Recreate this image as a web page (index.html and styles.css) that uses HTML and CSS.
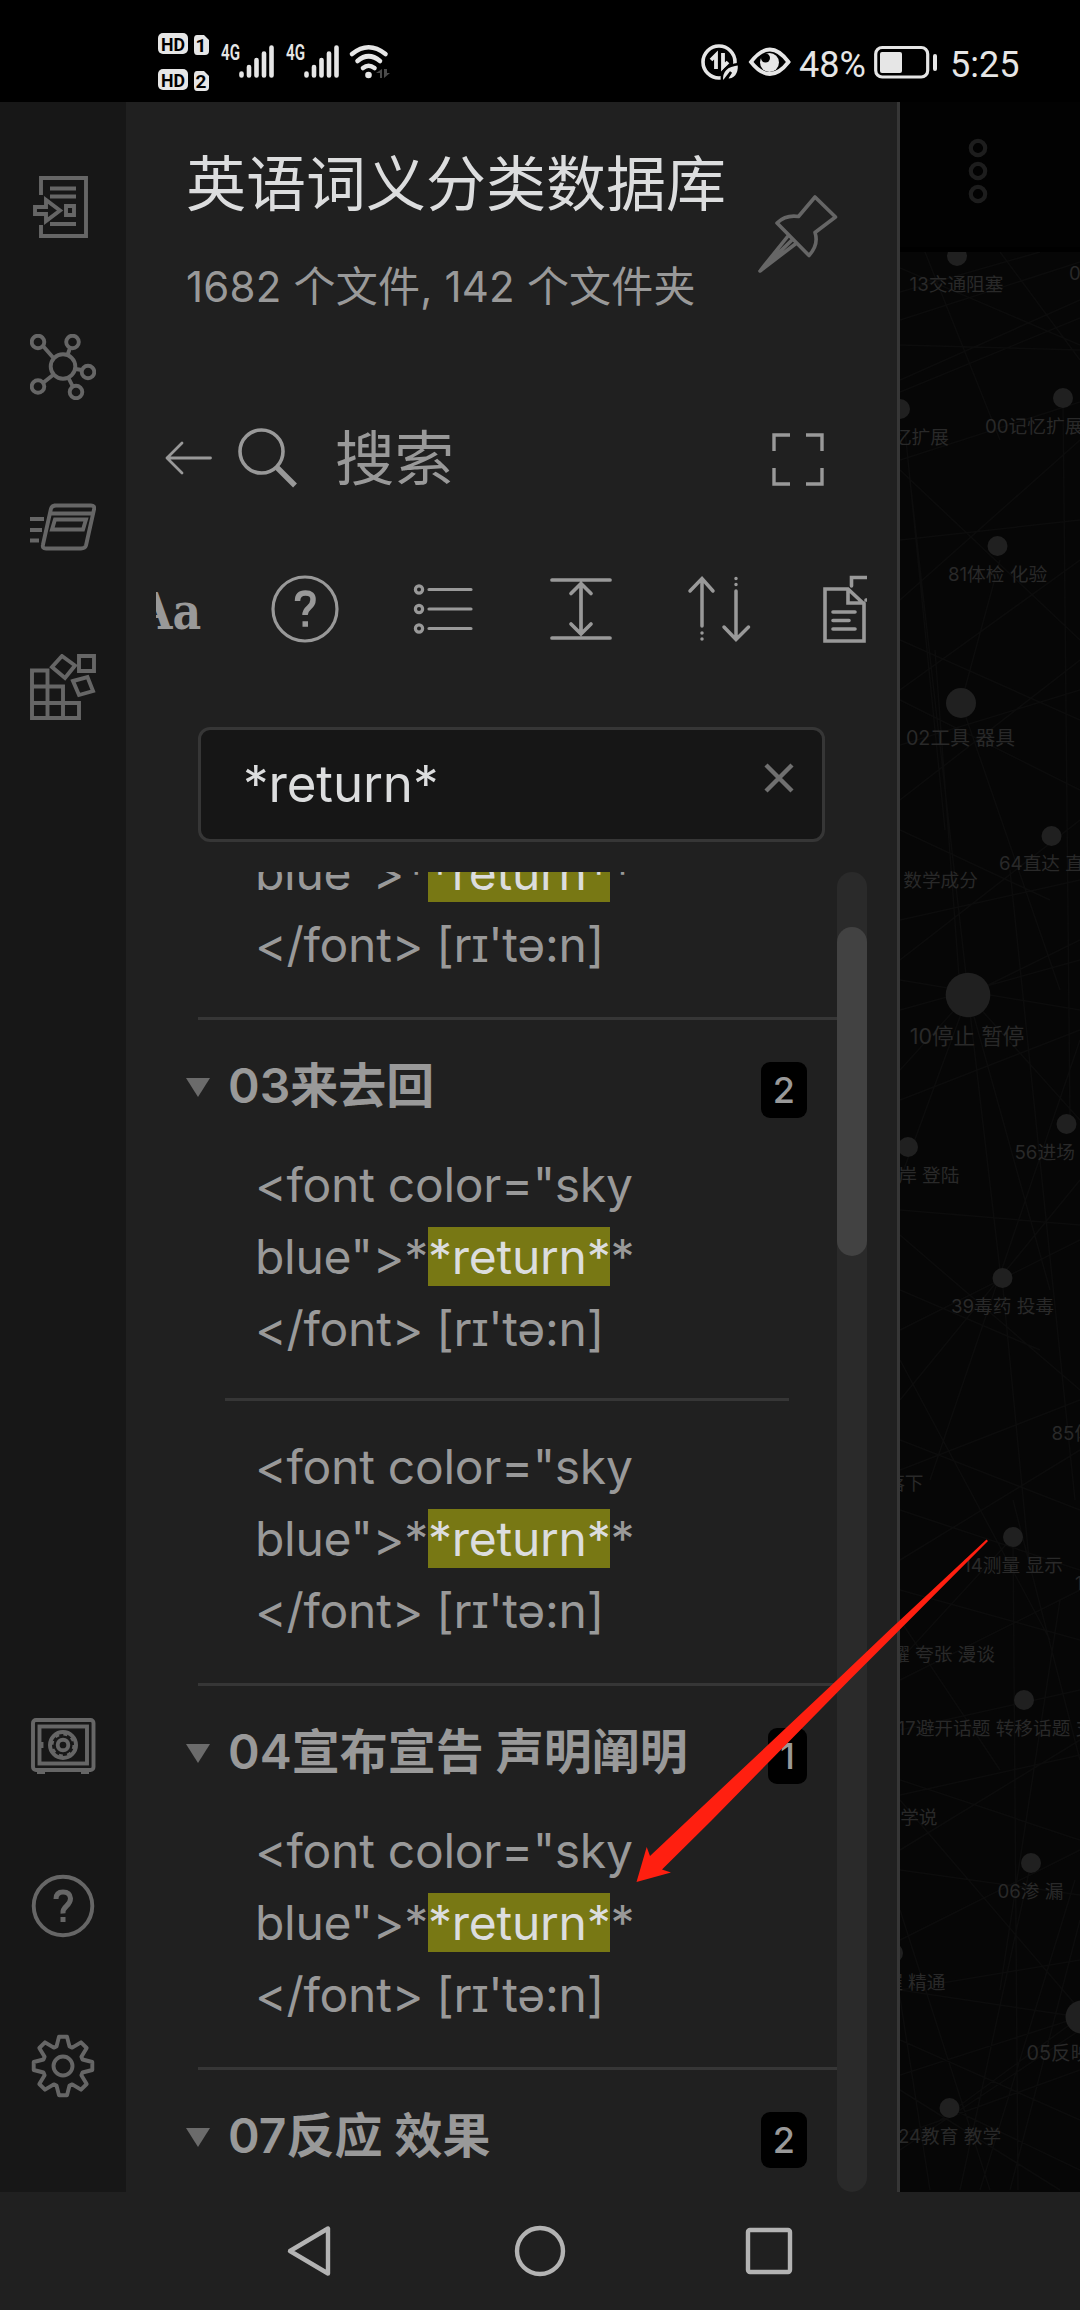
FILE: index.html
```html
<!DOCTYPE html>
<html lang="zh-CN">
<head>
<meta charset="utf-8">
<title>英语词义分类数据库</title>
<link rel="stylesheet" href="styles.css">
</head>
<body>
<div class="screen">
  <header class="status">
    <svg class="status-left" width="240" height="70" viewBox="155 25 240 70">
      <g fill="#e6e6e6">
        <rect x="158" y="33" width="30" height="21" rx="5"/>
        <rect x="158" y="69" width="30" height="21" rx="5"/>
        <path d="M197 35h7l5 5v11q0 4-4 4h-8q-3 0-3-4V39q0-4 3-4z"/>
        <path d="M197 71h7l5 5v11q0 4-4 4h-8q-3 0-3-4V75q0-4 3-4z"/>
      </g>
      <g class="chip">
        <text x="173" y="50.500" textLength="24" lengthAdjust="spacingAndGlyphs">HD</text><text x="173" y="86.500" textLength="24" lengthAdjust="spacingAndGlyphs">HD</text>
        <text x="201" y="51.500">1</text><text x="201" y="87.500">2</text>
      </g>
      <g class="net"><text x="221" y="60" textLength="19" lengthAdjust="spacingAndGlyphs">4G</text><text x="286" y="60" textLength="19" lengthAdjust="spacingAndGlyphs">4G</text></g>
      <path stroke="#e6e6e6" stroke-width="4.600" stroke-linecap="round" d="M241.500 73.500v2M249 67v8.500M256.500 60v15.500M264 53.500v22M271.500 47.500v28M306.500 73.500v2M314 67v8.500M321.500 60v15.500M329 53.500v22M336.500 47.500v28"/>
      <g fill="none" stroke="#e6e6e6" stroke-width="4.600" stroke-linecap="round"><path d="M352 54q16.500-13.500 33.500 0M357.500 61q11-9.500 22.500 0M363 68q5.500-4.500 11.500 0"/></g>
      <circle cx="368.500" cy="75" r="3.300" fill="#e6e6e6"/>
      <path fill="#4a4a4a" d="M376 73l6-4v9h-2v-5zM384 69v9l6-5h-3v-4z"/>
    </svg>
    <div class="status-right">
      <svg width="100" height="46" viewBox="698 40 100 46">
        <circle cx="719" cy="62" r="16" fill="none" stroke="#e6e6e6" stroke-width="3.600"/>
        <path fill="none" stroke="#e6e6e6" stroke-width="3.800" d="M716 69V55l-5 5M723 53v14l5-5"/>
        <path fill="#e6e6e6" stroke="#000" stroke-width="2.500" d="M722 81q-2-15 17-17 1 16-13 16l5-8-7 9z"/>
        <path fill="none" stroke="#e6e6e6" stroke-width="3.800" d="M751 62q19-25 37.500 0-18.500 24-37.500 0z"/>
        <circle cx="769.500" cy="62.500" r="9.500" fill="#e6e6e6"/><circle cx="765.500" cy="58" r="4.500" fill="#000"/>
      </svg>
      <span class="pct">48%</span>
      <svg class="battery" width="64" height="34" viewBox="874 45 64 34">
        <rect x="875.700" y="47.500" width="52" height="29.500" rx="6.500" fill="none" stroke="#e6e6e6" stroke-width="3.200"/>
        <rect x="880" y="52" width="22" height="21" rx="2" fill="#e6e6e6"/><rect x="933" y="54" width="4" height="17" rx="2" fill="#e6e6e6"/>
      </svg>
      <span class="clock">5:25</span>
    </div>
  </header>

  <div class="app">
    <nav class="ribbon">
      <svg viewBox="30 174 66 66"><path d="M41 195v-17h45v58H41v-11M50 188.500h26M50 196.500h26M50 224h26M66 206h8v9h-8zM35 207h11v-7l14 10.500L46 221v-7H35z"/></svg>
      <svg viewBox="30 334 66 66"><circle cx="63" cy="366.500" r="12.300"/><circle cx="38" cy="342" r="6.300"/><circle cx="72.500" cy="342" r="6.300"/><circle cx="88" cy="372" r="6.300"/><circle cx="38" cy="386.500" r="6.300"/><circle cx="76" cy="392" r="6.300"/><path d="M43 346l10.500 12M70 348l-2.500 7M75.500 369l6.500 1M43.500 382.500L53 375M68.500 378l4 8"/></svg>
      <svg viewBox="30 494 66 66"><path d="M54 505.500h37q4 0 3 4l-8 36q-1 3-5 3H46q-4 0-3-4l8-36q1-3 5-3M50 513.500h43M55 519.500h31l-3 10H52zM30 519h14M30 530h12M30 540.500h9"/></svg>
      <svg viewBox="30 654 66 66"><path d="M32 670.500h15.500V718M32 668.500v49.500h47v-15H32M32 686.500h31v32M79 656h15v15H79zM62 656l13 9.500L65 678l-13-11zM73 681l14.500-4L93 691l-14 4z"/></svg>
      <span class="grow"></span>
      <svg viewBox="30 1714 66 66"><rect x="33" y="1721" width="60.500" height="50" rx="3"/><rect x="39.500" y="1727.500" width="47.500" height="37"/><circle cx="63" cy="1746" r="13" stroke-width="4"/><circle cx="63" cy="1746" r="10.500" stroke-width="2" stroke-dasharray="4 4.250"/><circle cx="63" cy="1746" r="5.300"/><path d="M37 1773h8M81 1773h8M41.500 1743v6"/></svg>
      <svg viewBox="30 1873 66 66"><circle cx="63" cy="1906" r="29.300"/><path stroke-width="5" d="M56 1899q0-7 7-7t7.500 6.500q0 4-4 7.500t-3.500 7.500M60.500 1919.500h5"/></svg>
      <svg viewBox="-33 -33 66 66"><circle r="9.500"/><path stroke-linejoin="round" d="M-6.500-19.500L-4-29.300H4L6.500-19.500 9.200-18.400 18-23.700 23.700-18 18.400-9.200 19.500-6.500 29.300-4V4L19.500 6.500 18.400 9.200 23.700 18 18 23.700 9.200 18.400 6.500 19.500 4 29.300H-4L-6.500 19.500-9.200 18.400-18 23.700-23.700 18-18.400 9.200-19.500 6.500-29.300 4V-4L-19.500-6.500-18.400-9.200-23.700-18-18-23.700-9.200-18.400z"/></svg>
    </nav>

    <main class="drawer">
      <div class="vault">
        <div>
          <h1>英语词义分类数据库</h1>
          <p>1682 个文件, 142 个文件夹</p>
        </div>
        <svg width="80" height="80" viewBox="758 194 80 80" fill="none" stroke="#666" stroke-width="3.600" stroke-linejoin="round"><path d="M815 197l20.500 20-20.500 15.500q4 12-6 23L777 223q9-8.500 21.500-6.500zM788 236l-28 35 36-27.500M792.500 239.500L760 271"/></svg>
      </div>

      <div class="tabhead">
        <svg width="134" height="64" viewBox="165 426 134 64" fill="none" stroke="#999" stroke-linecap="round"><path stroke-width="2.800" stroke-linejoin="round" d="M210.500 458H167M182 443l-15 15 15 15"/><circle cx="261.500" cy="451.500" r="21.500" stroke-width="3.600"/><path stroke-width="5.500" stroke-linecap="butt" d="M277 467.500l18 18"/></svg>
        <span>搜索</span>
        <svg class="expand" width="54" height="56" viewBox="771 430 54 56" fill="none" stroke="#999" stroke-width="3.400"><path d="M790 434h-16v16M806 434h16v16M774 467v16h16M822 467v16h-16"/></svg>
      </div>

      <div class="tools">
        <span class="case">Aa</span>
        <svg width="596" height="72" viewBox="271 573 596 72" fill="none" stroke="#999" stroke-width="3.200" stroke-linecap="round">
          <circle cx="305" cy="609" r="32"/><path stroke-width="5.500" stroke-linecap="butt" d="M297.500 601q0-8 8-8t7.500 7q0 4-4 7.500t-4 7.500M302.500 624h5.500"/>
          <circle cx="419" cy="589.500" r="3.600"/><circle cx="419" cy="609" r="3.600"/><circle cx="419" cy="628.500" r="3.600"/>
          <path d="M429 589.500h42M429 609h42M429 628.500h42"/>
          <path stroke-width="3.700" d="M552 580h58M552 638h58M581 585v48M571 593.500l10-10 10 10M571 624l10 10 10-10"/>
          <path stroke-width="3.500" d="M702 626v-47M690 591l12-12.500L713 591M702 633v.1M702 639v.1M736 591v48M724 627l12 12.500 12.500-12.500M736 578.500v.1M736 584.500v.1"/>
          <path stroke-width="3.600" d="M848 589h-23v52h39v-37zM848 589v14h16M833 612h22M833 620.500h16M833 629h22M851.500 586v-8.500H869M866 600h4"/>
        </svg>
      </div>

      <div class="search"><span>*return*</span><svg width="32" height="32" viewBox="0 0 32 32" stroke="#707070" stroke-width="4.400"><path d="M3 3l26 26M29 3L3 29"/></svg></div>

      <div class="results">
        <div class="list">
          <section class="group first">
            <div class="match">&lt;font color="sky<br>blue"&gt;*<mark>*return*</mark>*<br>&lt;/font&gt; [rɪ'tə:n]</div>
          </section>
          <section class="group">
            <h2><i></i><b>03来去回</b><em>2</em></h2>
            <div class="match">&lt;font color="sky<br>blue"&gt;*<mark>*return*</mark>*<br>&lt;/font&gt; [rɪ'tə:n]</div>
            <div class="match">&lt;font color="sky<br>blue"&gt;*<mark>*return*</mark>*<br>&lt;/font&gt; [rɪ'tə:n]</div>
          </section>
          <section class="group">
            <h2><i></i><b>04宣布宣告 声明阐明</b><em>1</em></h2>
            <div class="match">&lt;font color="sky<br>blue"&gt;*<mark>*return*</mark>*<br>&lt;/font&gt; [rɪ'tə:n]</div>
          </section>
          <section class="group">
            <h2><i></i><b>07反应 效果</b><em>2</em></h2>
          </section>
        </div>
        <div class="track"><div class="thumb"></div></div>
      </div>
    </main>

    <svg class="graph" viewBox="900 102 180 2090">
      <rect x="900" y="102" width="180" height="2090" fill="#060606"/>
      <path class="edges" d="M900 320L1080 262M900 292L1040 252M900 380L1080 300M900 268L1080 345M925 252L1000 440M1000 252L1080 360M900 345L1080 350M900 392L1080 318M900 460L1080 402M900 470L1080 640M905 430L945 830M900 540L1080 520M900 600L1080 440M910 480L970 1010M1063 400L1070 1120M900 690L1080 560M900 640L1080 720M900 745L1080 690M900 700L1080 790M961 703L1000 560M900 800L1080 660M900 830L1050 900M935 650L960 990M961 703L1060 990M900 920L1080 880M900 960L1080 820M968 995L1080 940M900 980L1080 1010M968 995L900 1180M968 995L1000 1270M968 995L1050 1290M968 995L1080 1120M968 995L900 1070M900 1010L1080 960M1010 870L1075 1500M900 1100L1080 1030M900 1210L1080 1225M900 1330L1080 1240M1080 1040L930 1480M900 1235L1080 1390M900 1290L1040 1350M1002 1278L1030 1570M900 1400L1080 1180M900 1440L1080 1510M900 1470L1080 1400M900 1510L1080 1570M900 1360L1050 1640M900 1560L1080 1450M1013 1537L1018 2190M1013 1537L900 1660M900 1590L1080 1640M1013 1500L1080 1760M900 1680L1080 1590M900 1620L1000 1770M900 1730L1080 1690M900 1795L1080 1755M900 1780L1080 1840M1060 1600L1000 1990M900 1850L1080 1740M900 1870L1080 1895M1031 1863L960 2190M900 1940L1080 1850M893 1953L930 2190M900 1800L1080 2010M900 1990L1080 1960M1080 2017L900 1990M1080 2017L900 2075M1080 2017L940 2120M900 2040L1080 2120M900 2090L1060 2190M1075 1880L980 2190M900 2135L1080 2070M900 2150L1080 2030M950 2108L1080 2170M900 1910L990 2190M1080 1920L1010 2190"/>
      <g class="nodes"><circle cx="957" cy="256" r="10"/><circle cx="900" cy="409" r="10"/><circle cx="1063" cy="398" r="10"/><circle cx="997.500" cy="546" r="10"/><circle cx="961" cy="703" r="15"/><circle cx="1051.500" cy="836" r="10"/><circle cx="968" cy="995" r="22.300"/><circle cx="1066.500" cy="1124" r="10"/><circle cx="908" cy="1147" r="10"/><circle cx="1002.500" cy="1278" r="10"/><circle cx="1013" cy="1537" r="10"/><circle cx="1024" cy="1700" r="10"/><circle cx="1031" cy="1863" r="10"/><circle cx="893" cy="1953" r="10"/><circle cx="1082" cy="2017" r="16.500"/><circle cx="949.500" cy="2108" r="10"/></g>
      <g class="labels">
        <text x="956.500" y="291" class="mid">13交通阻塞</text><text x="1069" y="280">00</text>
        <text x="949" y="444" class="end">忆扩展</text><text x="985" y="433">00记忆扩展</text>
        <text x="997.500" y="580.500" class="mid">81体检 化验</text><text x="960.500" y="744.500" class="mid big">02工具 器具</text>
        <text x="999" y="870">64直达 直</text><text x="978" y="886.500" class="end">数学成分</text>
        <text x="967" y="1044" class="mid huge">10停止 暂停</text><text x="1014.500" y="1159">56进场</text>
        <text x="959.500" y="1182" class="end">岸 登陆</text><text x="1002.500" y="1313" class="mid">39毒药 投毒</text>
        <text x="1051.500" y="1440">85体</text><text x="923.500" y="1490" class="end">落下</text>
        <text x="1013" y="1572" class="mid">14测量 显示</text><text x="1075" y="1590">1</text>
        <text x="995" y="1660.500" class="end">耀 夸张 漫谈</text><text x="897.500" y="1735">17避开话题 转移话题 支</text>
        <text x="937.500" y="1824" class="end">学说</text><text x="1030.500" y="1897.500" class="mid">06渗 漏</text>
        <text x="945.500" y="1989" class="end">握 精通</text><text x="1026.500" y="2060" class="big">05反映</text>
        <text x="949.500" y="2142.500" class="mid">24教育 教学</text>
      </g>
      <rect x="900" y="102" width="180" height="145" fill="#020202"/><rect x="900" y="247" width="180" height="5" fill="#000"/>
      <g fill="none" stroke="#1d1d1d" stroke-width="4.200"><circle cx="978" cy="148" r="7.200"/><circle cx="978" cy="171" r="7.200"/><circle cx="978" cy="194" r="7.200"/></g>
    </svg>
  </div>

  <footer class="keys">
    <svg viewBox="0 0 60 60"><path stroke-linejoin="round" d="M47 7.500v45L9 30z"/></svg>
    <svg viewBox="0 0 60 60"><circle cx="30" cy="30" r="23"/></svg>
    <svg viewBox="0 0 60 60"><rect x="9" y="9" width="42" height="42" rx="2"/></svg>
  </footer>

  <svg class="arrow" width="1080" height="2310" viewBox="0 0 1080 2310"><path fill="#ff1f10" d="M986.500 1539.500L890 1629.500 837 1680 694 1814.500 650 1856 646.700 1847 636.500 1882 671 1872.500 662 1869.500 711 1821 849.500 1680 890 1639.500 988 1541z"/></svg>
</div>
</body>
</html>
```
FILE: styles.css
```css
* { box-sizing: border-box; }
body { margin: 0; background: #000; font-family: Inter, "Noto Sans CJK SC", sans-serif; }
.screen { position: relative; width: 1080px; height: 2310px; overflow: hidden; display: flex; flex-direction: column; background: #202020; }
svg { display: block; flex: none; }

.status { height: 102px; background: #000; display: flex; justify-content: space-between; padding: 25px 60px 0 155px; color: #e6e6e6; }
.chip { font: 700 19px Roboto, sans-serif; fill: #000; text-anchor: middle; }
.net { font: 600 21.500px Roboto, sans-serif; fill: #e6e6e6; }
.status-right { display: flex; align-items: flex-start; font: 36px/40px Roboto, sans-serif; }
.status-right svg { margin-top: 15px; }
.pct { width: 75px; margin: 20px 0 0 1px; }
.status-right .battery { margin-top: 20px; }
.clock { width: 70px; margin: 20px 0 0 12px; }

.app { height: 2090px; display: flex; }
.ribbon { width: 126px; background: #171717; display: flex; flex-direction: column; align-items: center; gap: 94px; padding: 72px 0 93px; }
.ribbon svg { width: 66px; height: 66px; fill: none; stroke: #666; stroke-width: 3.900; }
.grow { flex: 1; margin-bottom: -94px; }

.drawer { width: 774px; background: #202020; border-right: 3px solid #363636; display: flex; flex-direction: column; }
.vault { height: 276px; display: flex; justify-content: space-between; padding: 37px 59px 0 60px; }
.vault svg { margin-top: 55px; }
h1 { margin: 0; font-size: 60px; line-height: 90px; font-weight: 400; color: #dcddde; white-space: nowrap; }
.vault p { margin: 28px 0 0; font-size: 42px; line-height: 60px; letter-spacing: .2px; color: #999; white-space: nowrap; }

.tabhead { height: 160px; display: flex; align-items: center; padding: 0 72px 0 39px; color: #999; }
.tabhead span { font-size: 59.500px; line-height: 80px; margin-left: 36px; }
.tabhead .expand { margin: 2px 0 0 auto; }

.tools { height: 142px; width: 711px; margin-left: 30px; display: flex; align-items: center; justify-content: flex-end; overflow: hidden; color: #999; }
.case { flex: none; width: 92px; margin: 4px 44px 0 0; font: 700 51px/60px "DejaVu Serif", serif; transform: scaleX(.87); transform-origin: 24px 50%; }

.search { width: 627px; height: 115px; margin: 47px 0 30px 72px; border: 3px solid #363636; border-radius: 12px; background: #161616; display: flex; align-items: center; justify-content: space-between; padding: 0 27px 2px 42px; color: #dcddde; font-size: 51px; letter-spacing: -.1px; }
.search svg { margin-top: -11px; }

.results { height: 1320px; display: flex; padding-left: 60px; overflow: hidden; }
.list { width: 651px; }
.group { position: relative; padding-top: 29.500px; }
.group + .group::before, .match + .match::before { content: ""; display: block; height: 3px; background: #363636; }
.group + .group { padding-top: 0; }
.group + .group::before { margin-left: 12px; }
.first { margin-top: -107.500px; padding-top: 0; }
h2 { margin: 29.500px 0 27px; height: 72px; display: flex; align-items: center; font-size: 48px; line-height: 72px; color: #999; }
h2 i { border: 12px solid transparent; border-top: 19px solid #6b6b6b; border-bottom: 0; margin-top: 4px; }
h2 b { font-weight: 600; margin-left: 18px; white-space: nowrap; }
h2 em { margin: 9px 30px 0 auto; padding: 0 12px; height: 56px; border-radius: 9px; background: #000; font: 500 36px/56px Inter, sans-serif; }
.match { padding: 0 0 36.500px 69px; font-size: 48px; line-height: 72px; letter-spacing: -.27px; color: #999; white-space: nowrap; }
.match:has(+ .match) { padding-bottom: 33.500px; }
.match + .match::before { margin: 0 48px 29.500px -30px; }
mark { background: #787814; color: #dcddde; }
.track { width: 30px; background: #2a2a2a; border-radius: 15px; padding-top: 55px; }
.thumb { height: 329px; border-radius: 15px; background: #424242; }

.graph { width: 180px; height: 2090px; }
.edges { fill: none; stroke: #0c0c0c; stroke-width: 1.500; }
.nodes { fill: #202020; }
.labels { fill: #292929; font-size: 18.700px; }
.mid { text-anchor: middle; }
.end { text-anchor: end; }
.big { font-size: 19.800px; }
.huge { font-size: 21.500px; }

.keys { height: 118px; display: flex; justify-content: center; align-items: center; gap: 169px; background: #202020; }
.keys svg { width: 60px; height: 60px; fill: none; stroke: #b3b3b3; stroke-width: 4.400; }
.arrow { position: absolute; left: 0; top: 0; }
```
